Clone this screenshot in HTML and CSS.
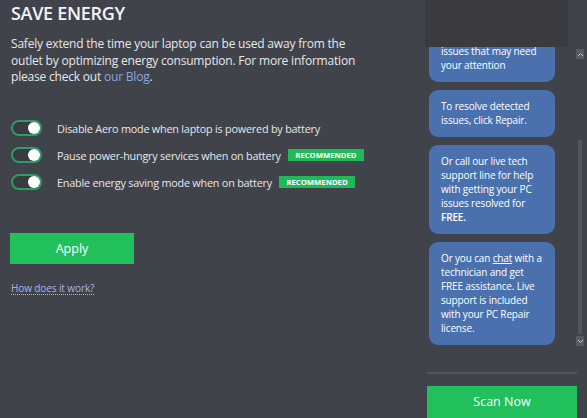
FILE: index.html
```html
<!DOCTYPE html>
<html lang="en">
<head>
    <meta charset="UTF-8">
    <meta name="viewport" content="width=device-width, initial-scale=1.0">
    <title>Save Energy</title>
    <link rel="stylesheet" href="styles.css">
</head>
<body>
    <div id="app">
        <div id="main">
            <h1 class="title">SAVE ENERGY</h1>
            <p class="intro">Safely extend the time your laptop can be used away from the outlet by optimizing energy consumption. For more information please check out <a href="#" class="blog-link">our Blog</a>.</p>

            <ul class="options">
                <li class="option">
                    <span class="toggle"></span>
                    <span class="option-label">Disable Aero mode when laptop is powered by battery</span>
                </li>
                <li class="option">
                    <span class="toggle"></span>
                    <span class="option-label">Pause power-hungry services when on battery</span>
                    <span class="badge">RECOMMENDED</span>
                </li>
                <li class="option">
                    <span class="toggle"></span>
                    <span class="option-label">Enable energy saving mode when on battery</span>
                    <span class="badge">RECOMMENDED</span>
                </li>
            </ul>

            <button class="btn apply-btn">Apply</button>
            <div><a href="#" class="how-link">How does it work?</a></div>
        </div>

        <div id="sidebar">
            <div class="agent-box"></div>
            <div class="chat">
                <div class="messages">
                    <div class="bubble">Scan complete. We have detected several<br>issues that may need<br>your attention</div>
                    <div class="bubble">To resolve detected issues, click Repair.</div>
                    <div class="bubble">Or call our live tech support line for help with getting your PC issues resolved for <b>FREE.</b></div>
                    <div class="bubble">Or you can <a href="#" class="chat-link">chat</a> with a technician and get FREE assistance. Live support is included with your PC Repair license.</div>
                </div>
                <div class="scrollbar">
                    <span class="scroll-btn">
                        <svg width="7" height="5" viewBox="0 0 7 5"><polyline points="1,4 3.5,1.5 6,4" fill="none" stroke="#c9cacd" stroke-width="1"/></svg>
                    </span>
                    <span class="scroll-track"><span class="scroll-thumb"></span></span>
                    <span class="scroll-btn">
                        <svg width="7" height="5" viewBox="0 0 7 5"><polyline points="1,1 3.5,3.5 6,1" fill="none" stroke="#c9cacd" stroke-width="1"/></svg>
                    </span>
                </div>
            </div>
            <div class="divider"></div>
            <button class="btn scan-btn">Scan Now</button>
        </div>
    </div>
</body>
</html>
```

FILE: styles.css
```css
body{
    margin: 0;
    background: #41434b;
    color: #e6e7ea;
    font-family: "Open Sans", "Noto Sans", sans-serif;
    overflow: hidden;
}
#app{
    display: flex;
    height: 100vh;
}
#main{
    box-sizing: border-box;
    width: 425px;
    padding: 0 11px;
}
.title{
    margin: 0;
    padding-top: 1px;
    font-size: 18px;
    letter-spacing: -0.3px;
    line-height: 24px;
    font-weight: 600;
    color: #f4f4f5;
}
.intro{
    width: 348px;
    margin: 11px 0 0 0;
    font-size: 12px;
    letter-spacing: -0.2px;
    line-height: 16.5px;
}
.blog-link{
    color: #8aa6da;
    text-decoration: none;
}

.options{
    list-style: none;
    margin: 29px 0 0 0;
    padding: 0;
}
.option{
    display: flex;
    align-items: center;
    height: 27px;
    font-size: 10.8px;
    letter-spacing: -0.2px;
}
.toggle{
    box-sizing: border-box;
    width: 31px;
    height: 16px;
    border: 2px solid #2a9f63;
    border-radius: 8px;
    background: #393b41;
    display: flex;
    align-items: center;
    justify-content: flex-end;
    margin-right: 15px;
}
.toggle::after{
    content: "";
    width: 12px;
    height: 12px;
    border-radius: 50%;
    background: #fff;
}
.badge{
    margin-left: 7px;
    height: 12px;
    line-height: 12px;
    padding: 0 7.5px;
    background: #1fb95a;
    color: #fff;
    font-size: 7.7px;
    letter-spacing: 0;
    font-weight: 700;
}

.btn{
    border: none;
    background: #22c05d;
    color: #fff;
    font-family: "Open Sans", "Noto Sans", sans-serif;
    cursor: pointer;
}
.apply-btn{
    display: block;
    margin: 37px 0 0 -1px;
    width: 124px;
    height: 31px;
    font-size: 12.5px;
}
.how-link{
    display: inline-block;
    margin-top: 18px;
    font-size: 10px;
    letter-spacing: -0.1px;
    color: #a8b4e6;
    text-decoration: none;
    border-bottom: 1px dotted #a8b4e6;
    line-height: 12px;
}

#sidebar{
    flex: 1;
    display: flex;
    flex-direction: column;
}
.agent-box{
    width: 143px;
    height: 47px;
    flex-shrink: 0;
    background: #3b3b3f;
}
.chat{
    display: flex;
    height: 310px;
    flex-shrink: 0;
}
.messages{
    flex: 1;
    overflow: hidden;
    display: flex;
    flex-direction: column;
    justify-content: flex-end;
    align-items: flex-start;
    gap: 8px;
    padding: 0 0 12px 4px;
}
.bubble{
    flex-shrink: 0;
    box-sizing: border-box;
    width: fit-content;
    max-width: 126px;
    padding: 9px 12px 10px 12px;
    background: #4a71ae;
    border-radius: 9px;
    color: #fff;
    font-size: 10px;
    letter-spacing: -0.15px;
    line-height: 14px;
}
.bubble b{
    font-weight: 600;
}
.chat-link{
    color: #fff;
}
.scrollbar{
    width: 8px;
    margin: 2px 3px 0 0;
    display: flex;
    flex-direction: column;
    align-items: center;
}
.scroll-btn{
    width: 8px;
    height: 10px;
    background: #5a5c62;
    display: flex;
    align-items: center;
    justify-content: center;
}
.scroll-track{
    height: 277px;
    display: flex;
    flex-direction: column;
    justify-content: flex-end;
}
.scroll-thumb{
    width: 4px;
    height: 194px;
    margin-bottom: 2px;
    background: #53555c;
}
.divider{
    height: 2px;
    margin: 15px 10px 0 2px;
    background: #56585f;
}
.scan-btn{
    margin: 12px 10px 0 2px;
    height: 34px;
    font-size: 12.5px;
}
```
